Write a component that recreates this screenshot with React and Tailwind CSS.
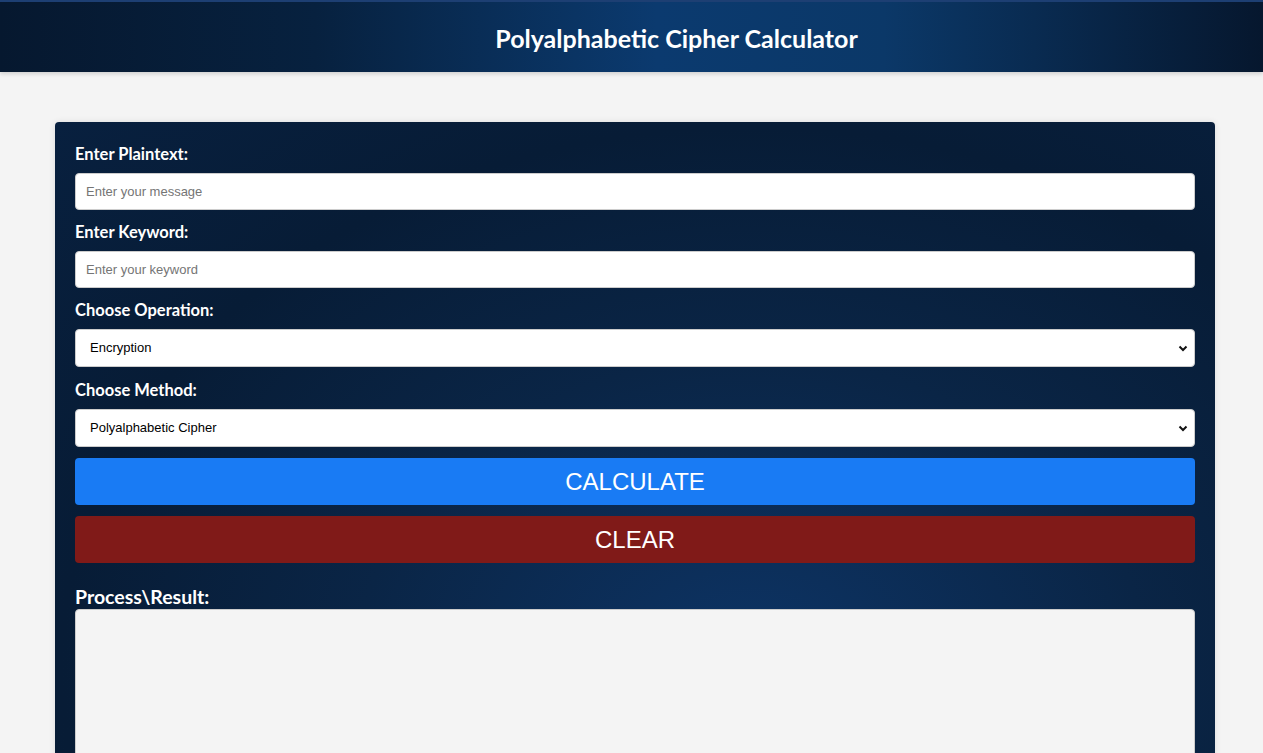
import React, { useState } from 'react';

function Chevron() {
  return (
    <svg className="pointer-events-none absolute right-[6px] top-1/2 -translate-y-1/2" width="12" height="12" viewBox="0 0 12 12">
      <path d="M2.5 4.5 L6 8 L9.5 4.5" fill="none" stroke="#111" strokeWidth="2" />
    </svg>
  );
}

export default function App() {
  const [plaintext, setPlaintext] = useState('');
  const [keyword, setKeyword] = useState('');
  const [operation, setOperation] = useState('encrypt');
  const [method, setMethod] = useState('poly');
  const [result, setResult] = useState('');

  const labelCls = "block mt-3 mb-2.5 h-5 leading-[22px] text-[16.5px] font-bold text-white font-['Lato',sans-serif]";
  const inputCls = "w-full h-[37px] rounded bg-white border border-[#ccc] px-2.5 text-[13px] text-black placeholder:text-[#757575] font-['Liberation_Sans',Arial,sans-serif] outline-none";
  const selectCls = "w-full h-[38px] rounded bg-white border border-[#ccc] pl-[14px] text-[13px] text-black appearance-none font-['Liberation_Sans',Arial,sans-serif] outline-none";

  return (
    <div className="min-h-screen bg-[#f4f4f4]">
      {/* Header */}
      <header className="h-[72px] border-t-2 border-[#1d3f73] bg-[linear-gradient(90deg,#06182f_0%,#07213f_25%,#0b3a6f_52%,#0b3868_70%,#06172e_100%)] flex items-center justify-center pl-[90px] pt-1 shadow-[0_2px_4px_rgba(0,0,0,0.15)]">
        <h1 className="text-[25px] font-bold text-white font-['Lato',sans-serif]">Polyalphabetic Cipher Calculator</h1>
      </header>

      {/* Calculator card */}
      <main className="pl-[55px] pt-[50px]">
        <div className="w-[1160px] rounded bg-[radial-gradient(ellipse_at_60%_75%,#0d3465_0%,#0a2546_40%,#071c36_70%,#08203f_100%)] px-5 pt-[21px] pb-10 shadow-[0_0_6px_rgba(0,0,0,0.1)]">
          <label className={labelCls + " !mt-0"}>Enter Plaintext:</label>
          <input
            type="text"
            placeholder="Enter your message"
            value={plaintext}
            onChange={(e) => setPlaintext(e.target.value)}
            className={inputCls}
          />

          <label className={labelCls + " !mt-[11px]"}>Enter Keyword:</label>
          <input
            type="text"
            placeholder="Enter your keyword"
            value={keyword}
            onChange={(e) => setKeyword(e.target.value)}
            className={inputCls}
          />

          <label className={labelCls + " !mt-[11px]"}>Choose Operation:</label>
          <div className="relative">
            <select value={operation} onChange={(e) => setOperation(e.target.value)} className={selectCls}>
              <option value="encrypt">Encryption</option>
              <option value="decrypt">Decryption</option>
            </select>
            <Chevron />
          </div>

          <label className={labelCls}>Choose Method:</label>
          <div className="relative">
            <select value={method} onChange={(e) => setMethod(e.target.value)} className={selectCls}>
              <option value="poly">Polyalphabetic Cipher</option>
            </select>
            <Chevron />
          </div>

          <button
            onClick={() => setResult(plaintext)}
            className="mt-[11px] w-full h-[47px] rounded bg-[#197bf4] text-white text-[24px] font-['Liberation_Sans',Arial,sans-serif]"
          >
            CALCULATE
          </button>
          <button
            onClick={() => { setPlaintext(''); setKeyword(''); setResult(''); }}
            className="mt-[11px] w-full h-[47px] rounded bg-[#801a18] text-white text-[24px] font-['Liberation_Sans',Arial,sans-serif]"
          >
            CLEAR
          </button>

          <label className="block mt-[22px] mb-0 text-[19.5px] leading-6 font-bold text-white font-['Lato',sans-serif]">Process\Result:</label>
          <textarea
            readOnly
            value={result}
            className="block w-full h-[200px] rounded-sm bg-[#f4f4f4] border border-[#ccc] p-2 text-[13px] resize-none outline-none"
          />
        </div>
      </main>
    </div>
  );
}
